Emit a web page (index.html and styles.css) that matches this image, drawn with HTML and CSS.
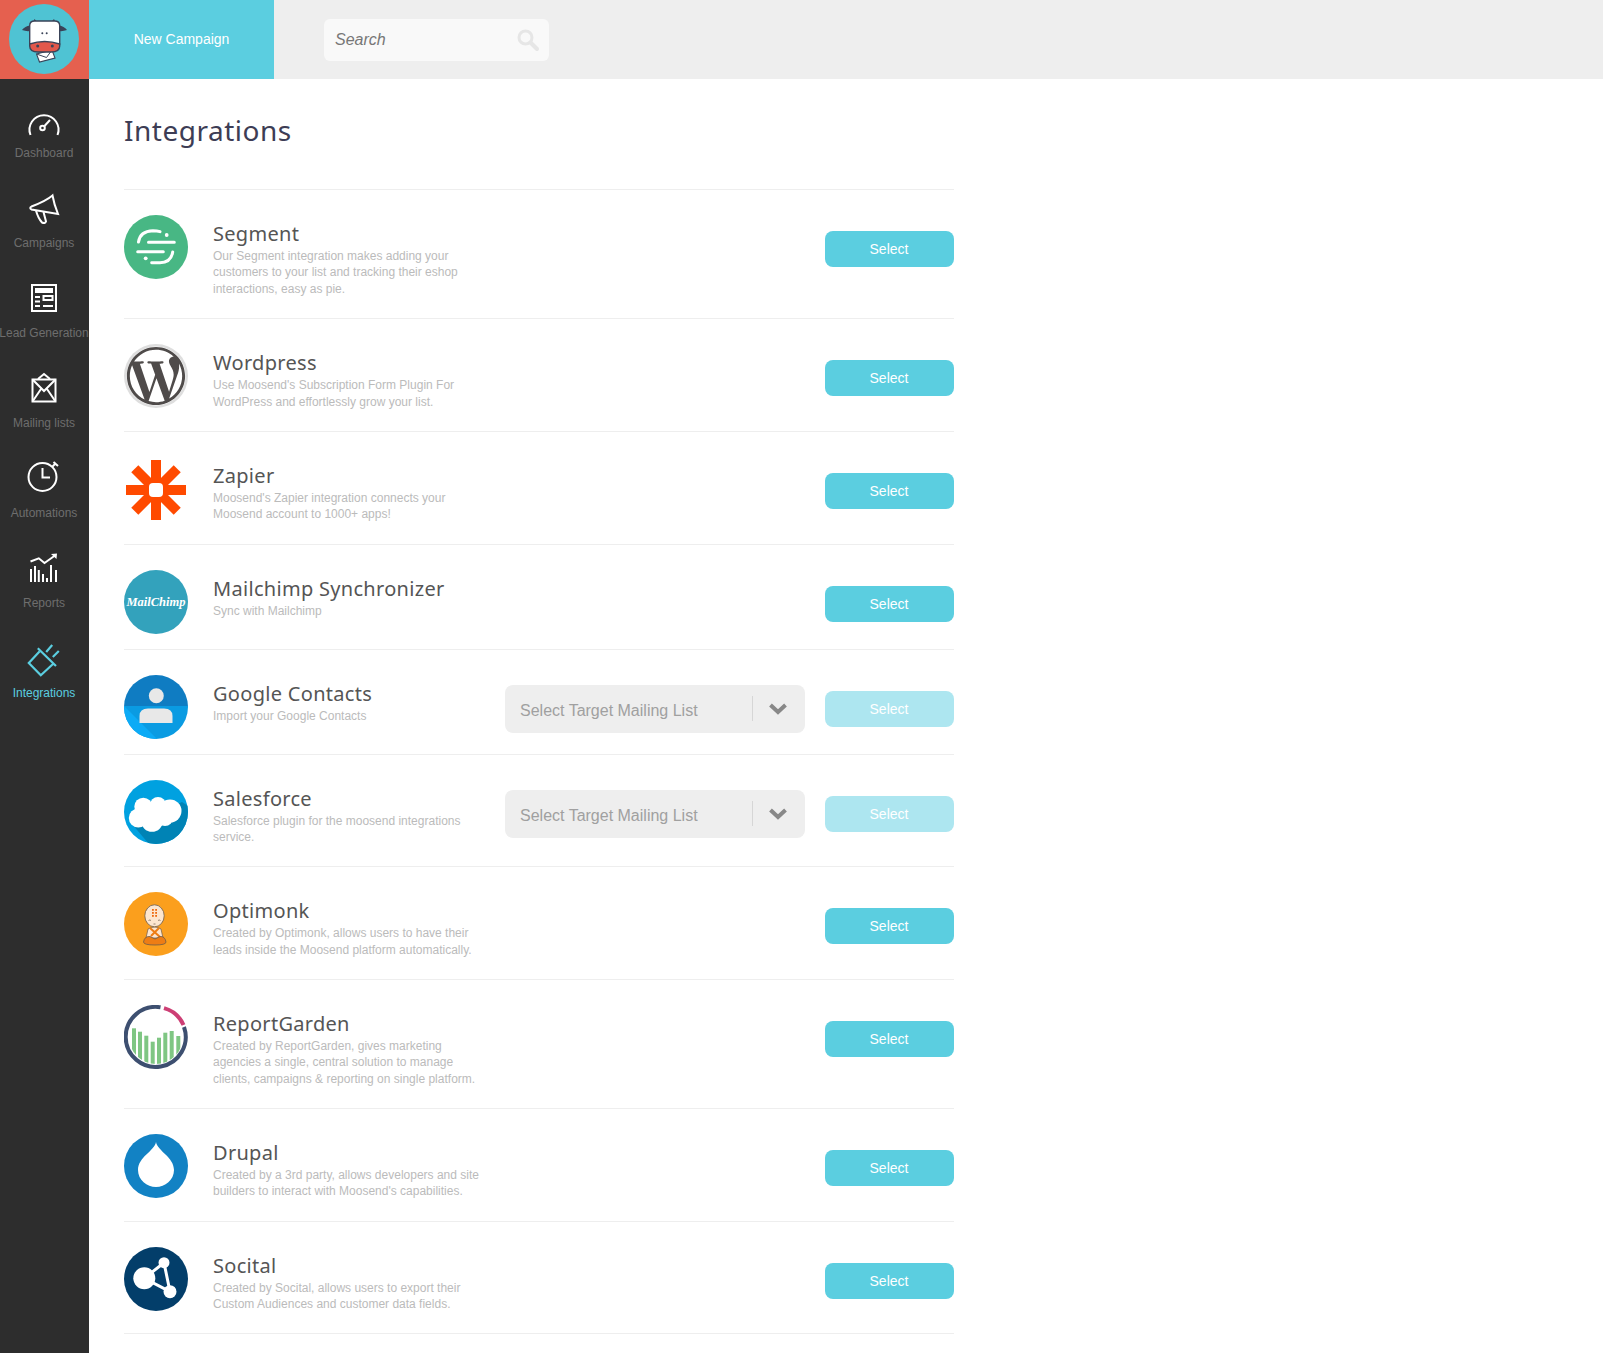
FILE: index.html
```html
<!DOCTYPE html>
<html lang="en">
<head>
    <meta charset="UTF-8">
    <meta name="viewport" content="width=device-width, initial-scale=1.0">
    <title>Integrations</title>
    <link rel="stylesheet" href="styles.css">
</head>
<body>
    <header class="topbar">
        <a href="#" class="logo">
            <svg width="89" height="79" viewBox="0 0 89 79">
                <circle cx="44" cy="39" r="35" fill="#4fc3d3"/>
                <path d="M22 30 Q25 26 30 25.500 L30 31 Q26 31.500 22 30Z M67 30 Q64 26 59 25.500 L59 31 Q63 31.500 67 30Z" fill="#3a4358"/>
                <path d="M33 22 l1.500 -3 l3 3z M51 22 l3 -3 l1.500 3z" fill="#3a4358"/>
                <path d="M36.500 54 L52 50 L55 58 L39.500 62Z" fill="#fff" stroke="#3a4358" stroke-width="1.100"/>
                <path d="M36.500 54 L46.500 57.500 L52 50" fill="none" stroke="#3a4358" stroke-width="1"/>
                <path d="M29.700 25.500 Q29.700 21 34.500 21 H54.500 Q59.700 21 59.700 25.500 V44 H29.700Z" fill="#fff" stroke="#3a4358" stroke-width="1.400"/>
                <path d="M29.700 44 Q44.500 39 59.700 44 V46 Q59.700 52 51 52 H38 Q29.700 52 29.700 46Z" fill="#e2584b" stroke="#3a4358" stroke-width="1.400"/>
                <circle cx="42.300" cy="33.300" r="1" fill="#3a4358"/>
                <circle cx="46.700" cy="33.300" r="1" fill="#3a4358"/>
                <circle cx="37.700" cy="46" r="1.500" fill="#3a4358"/>
                <circle cx="52.300" cy="46" r="1.500" fill="#3a4358"/>
            </svg>
        </a>
        <a href="#" class="new_campaign">New Campaign</a>
        <div class="search">
            <span class="search_text">Search</span>
            <svg width="24" height="24" viewBox="0 0 24 24">
                <circle cx="9.500" cy="9.500" r="6.500" fill="none" stroke="#e6e6e6" stroke-width="3"/>
                <path d="M14.500 14.500 L21 21" stroke="#e6e6e6" stroke-width="4" stroke-linecap="round"/>
            </svg>
        </div>
    </header>

    <div class="page">
        <nav class="sidebar">
            <a href="#" class="nav_item">
                <svg viewBox="0 0 40 40"><path d="M6.500 35 A14.500 14.500 0 1 1 33.500 35" class="ico"/><circle cx="18.500" cy="28" r="2.300" class="ico"/><path d="M20.500 26 L26 20" class="ico"/></svg>
                <span>Dashboard</span>
            </a>
            <a href="#" class="nav_item">
                <svg viewBox="0 0 40 40"><path d="M28.500 5.500 Q22 11 7.500 16.500 Q5 18 7.500 19.500 L34 24 Q30 14 28.500 5.500Z" class="ico"/><path d="M12 20.500 Q14 28 18 32.500 Q21 34 22 31.500 L19.500 22" class="ico"/></svg>
                <span>Campaigns</span>
            </a>
            <a href="#" class="nav_item">
                <svg viewBox="0 0 40 40"><rect x="8" y="5" width="24" height="26" class="ico"/><rect x="11" y="8" width="18" height="5" fill="#fff"/><path d="M11 17 H16 M11 21.500 H16 M11 26 H16 M19 26 H29" class="ico"/><rect x="19.500" y="16" width="9" height="4" class="ico"/></svg>
                <span>Lead Generation</span>
            </a>
            <a href="#" class="nav_item">
                <svg viewBox="0 0 40 40"><rect x="8.500" y="9.500" width="23" height="22" class="ico"/><path d="M8.500 9.500 L20 21 L31.500 9.500 M8.500 31.500 L17 19 M31.500 31.500 L23 19 M14 9 L20 4 L26 9" class="ico"/></svg>
                <span>Mailing lists</span>
            </a>
            <a href="#" class="nav_item">
                <svg viewBox="0 0 40 40"><circle cx="18.500" cy="17" r="14" class="ico"/><path d="M18.500 8 V17.500 H26 M28 7 L32 3 M29.500 2 L34 6" class="ico"/></svg>
                <span>Automations</span>
            </a>
            <a href="#" class="nav_item">
                <svg viewBox="0 0 40 40"><path d="M7 32 V19 M11 32 V16 M14.800 32 V20 M19 32 V24 M23 32 V28 M27 32 V15 M32 32 V20" class="ico"/><path d="M6.500 11.500 L14.800 8.300 L20.500 13 L31 5.500" class="ico"/><path d="M27 4 L33 3.500 L32.500 9Z" fill="#fff"/></svg>
                <span>Reports</span>
            </a>
            <a href="#" class="nav_item active">
                <svg viewBox="0 0 40 40"><path d="M15.500 11.500 L4.800 23 L16.800 35.300 L29 24 M13.800 8.300 L32 26 M22.200 12 L28.200 5 M28.800 17 L34.800 11" class="ico_on"/></svg>
                <span>Integrations</span>
            </a>
        </nav>

        <main class="content">
            <h1>Integrations</h1>

            <ul class="list">
                <li class="row">
                    <svg class="logo_icon" viewBox="0 0 64 64">
                        <circle cx="32" cy="32" r="32" fill="#48b784"/>
                        <path d="M24.500 27.300 H50.300 M13.700 36.700 H39.300 M14.500 27 Q16 16 29 15.700 Q33 15.700 36 16.700 M48.700 37 Q47 47.700 36 47.700 Q31 48 27.700 47.700" fill="none" stroke="#fff" stroke-width="3" stroke-linecap="round"/>
                        <circle cx="42.700" cy="20" r="1.900" fill="#fff"/>
                        <circle cx="21.700" cy="43.300" r="1.900" fill="#fff"/>
                    </svg>
                    <div class="text">
                        <h3>Segment</h3>
                        <p>Our Segment integration makes adding your customers to your list and tracking their eshop interactions, easy as pie.</p>
                    </div>
                    <a href="#" class="btn">Select</a>
                </li>
                <li class="row">
                    <svg class="logo_icon" viewBox="0 0 64 64">
                        <circle cx="32" cy="32" r="32" fill="#dedede"/>
                        <circle cx="32" cy="32" r="29.500" fill="#fff"/>
                        <path transform="translate(2.900 2.900) scale(2.425)" fill="#4f4b4a" d="M21.469 6.825c.84 1.537 1.318 3.3 1.318 5.175 0 3.979-2.156 7.456-5.363 9.325l3.295-9.527c.615-1.54.82-2.771.82-3.864 0-.405-.026-.78-.07-1.11m-7.981.105c.647-.03 1.232-.105 1.232-.105.582-.075.514-.93-.067-.899 0 0-1.755.135-2.88.135-1.064 0-2.85-.15-2.85-.15-.585-.03-.661.855-.075.885 0 0 .54.061 1.125.09l1.68 4.605-2.37 7.08L5.354 6.9c.649-.03 1.234-.1 1.234-.1.585-.075.516-.93-.065-.896 0 0-1.746.138-2.874.138-.2 0-.438-.008-.69-.015C4.911 3.15 8.235 1.215 12 1.215c2.809 0 5.365 1.072 7.286 2.833-.046-.003-.091-.009-.141-.009-1.06 0-1.812.923-1.812 1.914 0 .89.513 1.643 1.06 2.531.411.72.89 1.643.89 2.977 0 .915-.354 1.994-.821 3.479l-1.075 3.585-3.9-11.61.001.014zM12 22.784c-1.059 0-2.081-.153-3.048-.437l3.237-9.406 3.315 9.087c.024.053.05.101.078.149-1.12.393-2.325.609-3.582.609M1.211 12c0-1.564.336-3.05.935-4.39L7.29 21.709C3.694 19.96 1.212 16.271 1.21 12M12 0C5.385 0 0 5.385 0 12s5.385 12 12 12 12-5.385 12-12S18.615 0 12 0"/>
                    </svg>
                    <div class="text">
                        <h3>Wordpress</h3>
                        <p>Use Moosend's Subscription Form Plugin For WordPress and effortlessly grow your list.</p>
                    </div>
                    <a href="#" class="btn">Select</a>
                </li>
                <li class="row">
                    <svg class="logo_icon" viewBox="0 0 64 64">
                        <g fill="#ff4a00">
                            <rect x="27" y="3" width="10" height="60"/>
                            <rect x="2" y="28" width="60" height="10"/>
                            <rect x="27" y="3" width="10" height="60" transform="rotate(45 32 33)"/>
                            <rect x="27" y="3" width="10" height="60" transform="rotate(-45 32 33)"/>
                            <rect x="22" y="23" width="20" height="20" rx="5"/>
                        </g>
                        <rect x="25" y="26" width="14" height="14" rx="4" fill="#fff"/>
                    </svg>
                    <div class="text">
                        <h3>Zapier</h3>
                        <p>Moosend's Zapier integration connects your Moosend account to 1000+ apps!</p>
                    </div>
                    <a href="#" class="btn">Select</a>
                </li>
                <li class="row">
                    <svg class="logo_icon" viewBox="0 0 64 64">
                        <circle cx="32" cy="32" r="32" fill="#33a2bc"/>
                        <text x="32" y="36" class="chimp" text-anchor="middle">MailChimp</text>
                    </svg>
                    <div class="text">
                        <h3>Mailchimp Synchronizer</h3>
                        <p>Sync with Mailchimp</p>
                    </div>
                    <a href="#" class="btn">Select</a>
                </li>
                <li class="row">
                    <svg class="logo_icon" viewBox="0 0 64 64">
                        <clipPath id="clip_google"><circle cx="32" cy="32" r="32"/></clipPath>
                        <g clip-path="url(#clip_google)">
                            <rect width="64" height="31" fill="#0f7cc2"/>
                            <rect y="31" width="64" height="33" fill="#0a9be2"/>
                            <path d="M0 31 L33 64 L0 64Z" fill="#0cabf6"/>
                        </g>
                        <circle cx="32.300" cy="20.700" r="7.500" fill="#e8e8e8"/>
                        <path d="M15.500 48 V41 Q15.500 33.500 24 33.500 H40 Q48.500 33.500 48.500 41 V48Z" fill="#e8e8e8"/>
                    </svg>
                    <div class="text">
                        <h3>Google Contacts</h3>
                        <p>Import your Google Contacts</p>
                    </div>
                    <div class="target">
                        <span class="target_text">Select Target Mailing List</span>
                        <span class="target_sep"></span>
                        <svg width="20" height="14" viewBox="0 0 20 14"><path d="M2.500 3 L10 10 L17.500 3" fill="none" stroke="#888" stroke-width="4"/></svg>
                    </div>
                    <a href="#" class="btn off">Select</a>
                </li>
                <li class="row">
                    <svg class="logo_icon" viewBox="0 0 64 64">
                        <clipPath id="clip_sf"><circle cx="32" cy="32" r="32"/></clipPath>
                        <g clip-path="url(#clip_sf)">
                            <rect width="64" height="64" fill="#00a1e0"/>
                            <path d="M8 44 L30 70 L70 70 L70 30 L58 22Z" fill="#0083b5"/>
                        </g>
                        <g fill="#fff">
                            <circle cx="19.300" cy="26.700" r="9"/>
                            <circle cx="34" cy="25" r="8"/>
                            <circle cx="46" cy="31" r="11.500"/>
                            <circle cx="14.300" cy="38" r="9.500"/>
                            <circle cx="28" cy="41" r="10.800"/>
                            <circle cx="41" cy="38" r="8"/>
                            <rect x="14" y="26" width="34" height="14"/>
                        </g>
                    </svg>
                    <div class="text">
                        <h3>Salesforce</h3>
                        <p>Salesforce plugin for the moosend integrations service.</p>
                    </div>
                    <div class="target">
                        <span class="target_text">Select Target Mailing List</span>
                        <span class="target_sep"></span>
                        <svg width="20" height="14" viewBox="0 0 20 14"><path d="M2.500 3 L10 10 L17.500 3" fill="none" stroke="#888" stroke-width="4"/></svg>
                    </div>
                    <a href="#" class="btn off">Select</a>
                </li>
                <li class="row">
                    <svg class="logo_icon" viewBox="0 0 64 64">
                        <circle cx="32" cy="32" r="32" fill="#fb9f1d"/>
                        <path d="M24 37 Q31 33 37 37 L39 46 H22Z" fill="#fde6cf" stroke="#6b5a4a" stroke-width=".7"/>
                        <path d="M26 36 L36 45 M35 36 L27 44" fill="none" stroke="#ee7d14" stroke-width="2"/>
                        <path d="M19.500 50 Q20.500 44 26 44.500 L31 47 L36 44.500 Q41 44 42 50 Q42 53 31 53 Q19.500 53 19.500 50Z" fill="#ee7d14" stroke="#6b5a4a" stroke-width=".8"/>
                        <ellipse cx="30.500" cy="23.800" rx="9.700" ry="11" fill="#fde6cf" stroke="#6b5a4a" stroke-width=".8"/>
                        <g fill="#ee6a10">
                            <rect x="28" y="17" width="1.800" height="1.800"/><rect x="31.200" y="17" width="1.800" height="1.800"/>
                            <rect x="28" y="20" width="1.800" height="1.800"/><rect x="31.200" y="20" width="1.800" height="1.800"/>
                            <rect x="28" y="23" width="1.800" height="1.800"/><rect x="31.200" y="23" width="1.800" height="1.800"/>
                        </g>
                        <path d="M24.500 28.500 Q26 27.500 27 28.500 M34 28.500 Q35 27.500 36.500 28.500 M29.500 32 H31.500" fill="none" stroke="#6b5a4a" stroke-width=".7"/>
                    </svg>
                    <div class="text">
                        <h3>Optimonk</h3>
                        <p>Created by Optimonk, allows users to have their leads inside the Moosend platform automatically.</p>
                    </div>
                    <a href="#" class="btn">Select</a>
                </li>
                <li class="row">
                    <svg class="logo_icon" viewBox="0 0 64 64">
                        <clipPath id="clip_rg"><circle cx="32" cy="32" r="27"/></clipPath>
                        <g clip-path="url(#clip_rg)" fill="#7fc683">
                            <rect x="8" y="23.300" width="4" height="41"/>
                            <rect x="14" y="26.700" width="4" height="38"/>
                            <rect x="20.300" y="30.700" width="4" height="34"/>
                            <rect x="26.700" y="36.700" width="4" height="28"/>
                            <rect x="33" y="32.700" width="4" height="32"/>
                            <rect x="39.300" y="27.700" width="4" height="37"/>
                            <rect x="45.700" y="26" width="4" height="38"/>
                            <rect x="52.300" y="31" width="4" height="33"/>
                        </g>
                        <path d="M60 22 A30 30 0 1 1 36.500 2.300" fill="none" stroke="#3d4f70" stroke-width="4"/>
                        <path d="M40 3.100 A30 30 0 0 1 59.500 20" fill="none" stroke="#cd3f75" stroke-width="4"/>
                    </svg>
                    <div class="text">
                        <h3>ReportGarden</h3>
                        <p>Created by ReportGarden, gives marketing agencies a single, central solution to manage clients, campaigns &amp; reporting on single platform.</p>
                    </div>
                    <a href="#" class="btn">Select</a>
                </li>
                <li class="row">
                    <svg class="logo_icon" viewBox="0 0 64 64">
                        <circle cx="32" cy="32" r="32" fill="#1282c4"/>
                        <path d="M32 8 C33.500 17 50 23 50 36 C50 46 41 53 32 53 C23 53 14 46 14 36 C14 23 30.500 17 32 8Z" fill="#fff"/>
                    </svg>
                    <div class="text">
                        <h3>Drupal</h3>
                        <p>Created by a 3rd party, allows developers and site builders to interact with Moosend's capabilities.</p>
                    </div>
                    <a href="#" class="btn">Select</a>
                </li>
                <li class="row">
                    <svg class="logo_icon" viewBox="0 0 64 64">
                        <circle cx="32" cy="32" r="32" fill="#033e6a"/>
                        <path d="M20.300 31.300 L40 15.700 L46 44.700Z" fill="none" stroke="#fff" stroke-width="3"/>
                        <circle cx="20.300" cy="31.300" r="11" fill="#fff"/>
                        <circle cx="40" cy="15.700" r="5.500" fill="#fff"/>
                        <circle cx="46" cy="44.700" r="6.500" fill="#fff"/>
                    </svg>
                    <div class="text">
                        <h3>Socital</h3>
                        <p>Created by Socital, allows users to export their Custom Audiences and customer data fields.</p>
                    </div>
                    <a href="#" class="btn">Select</a>
                </li>
            </ul>
        </main>
    </div>
</body>
</html>
```

FILE: styles.css
```css
* {
    margin: 0;
    padding: 0;
    box-sizing: border-box;
}

html,
body {
    height: 100%;
    overflow: hidden;
}

body {
    display: flex;
    flex-direction: column;
    background: #fff;
    font-family: "Liberation Sans", Arial, sans-serif;
}

a {
    text-decoration: none;
}

li {
    list-style: none;
}

/* top bar */
.topbar {
    display: flex;
    align-items: center;
    flex: 0 0 79px;
    background: #eee;
}

.logo {
    display: block;
    width: 89px;
    height: 79px;
    background: #e5604f;
}

.logo svg {
    display: block;
}

.new_campaign {
    display: flex;
    align-items: center;
    justify-content: center;
    width: 185px;
    height: 79px;
    padding-bottom: 2px;
    background: #5bcee0;
    color: #fff;
    font-size: 14px;
}

.search {
    display: flex;
    align-items: center;
    justify-content: space-between;
    width: 225px;
    height: 42px;
    margin-left: 50px;
    padding: 0 9px 0 11px;
    background: #f9f9f9;
    border-radius: 6px;
}

.search_text {
    color: #777;
    font-size: 16px;
    font-style: italic;
}

/* sidebar */
.page {
    display: flex;
    flex: 1;
    min-height: 0;
}

.sidebar {
    flex: 0 0 89px;
    min-width: 0;
    padding-top: 21px;
    background: #2d2d2d;
}

.nav_item {
    display: flex;
    flex-direction: column;
    align-items: center;
    height: 90px;
    padding-right: 1px;
    color: #6e6e6e;
    font-size: 12px;
    line-height: 14px;
    white-space: nowrap;
}

.nav_item svg {
    flex: 0 0 40px;
    width: 40px;
    height: 40px;
    margin-bottom: 6px;
}

.nav_item.active {
    color: #5bcee0;
}

.ico {
    fill: none;
    stroke: #fff;
    stroke-width: 2;
}

.ico_on {
    fill: none;
    stroke: #5bcee0;
    stroke-width: 2.200;
}

/* list */
.content {
    flex: 1;
    padding-left: 35px;
}

h1 {
    height: 110px;
    padding-top: 31px;
    color: #3d3d55;
    font-family: "Noto Sans", sans-serif;
    font-size: 28px;
    font-weight: 400;
    line-height: 40px;
    letter-spacing: .5px;
}

.list {
    width: 830px;
    border-top: 1px solid #eee;
}

.row {
    display: flex;
    align-items: flex-start;
    padding: 25px 0 15px;
    border-bottom: 1px solid #eee;
}

.logo_icon {
    flex: 0 0 64px;
    width: 64px;
    height: 64px;
    margin-right: 25px;
}

.chimp {
    fill: #fff;
    font-family: "Liberation Serif", serif;
    font-size: 12.500px;
    font-style: italic;
    font-weight: 700;
}

.text {
    width: 270px;
    padding-bottom: 5.900px;
}

h3 {
    height: 33px;
    padding-top: 4px;
    color: #555;
    font-family: "Noto Sans", sans-serif;
    font-size: 20px;
    font-weight: 400;
    line-height: 29px;
    letter-spacing: .3px;
}

.text p {
    color: #bbb;
    font-size: 12px;
    line-height: 16.400px;
}

.btn {
    width: 129px;
    height: 36px;
    margin: 16px 0 0 auto;
    padding-right: 1px;
    background: #5bcee0;
    border-radius: 8px;
    color: #fff;
    font-size: 14px;
    line-height: 36px;
    text-align: center;
}

.btn.off {
    margin-left: 20px;
    background: #ade6f0;
}

.target {
    display: flex;
    align-items: center;
    width: 300px;
    height: 48px;
    margin: 10px 0 0 auto;
    padding: 0 17px 0 15px;
    background: #eee;
    border-radius: 8px;
}

.target_text {
    flex: 1;
    padding-top: 4px;
    color: #a0a0a0;
    font-size: 16px;
}

.target_sep {
    width: 1px;
    height: 25px;
    margin-right: 15px;
    background: #d6d6d6;
}
```
